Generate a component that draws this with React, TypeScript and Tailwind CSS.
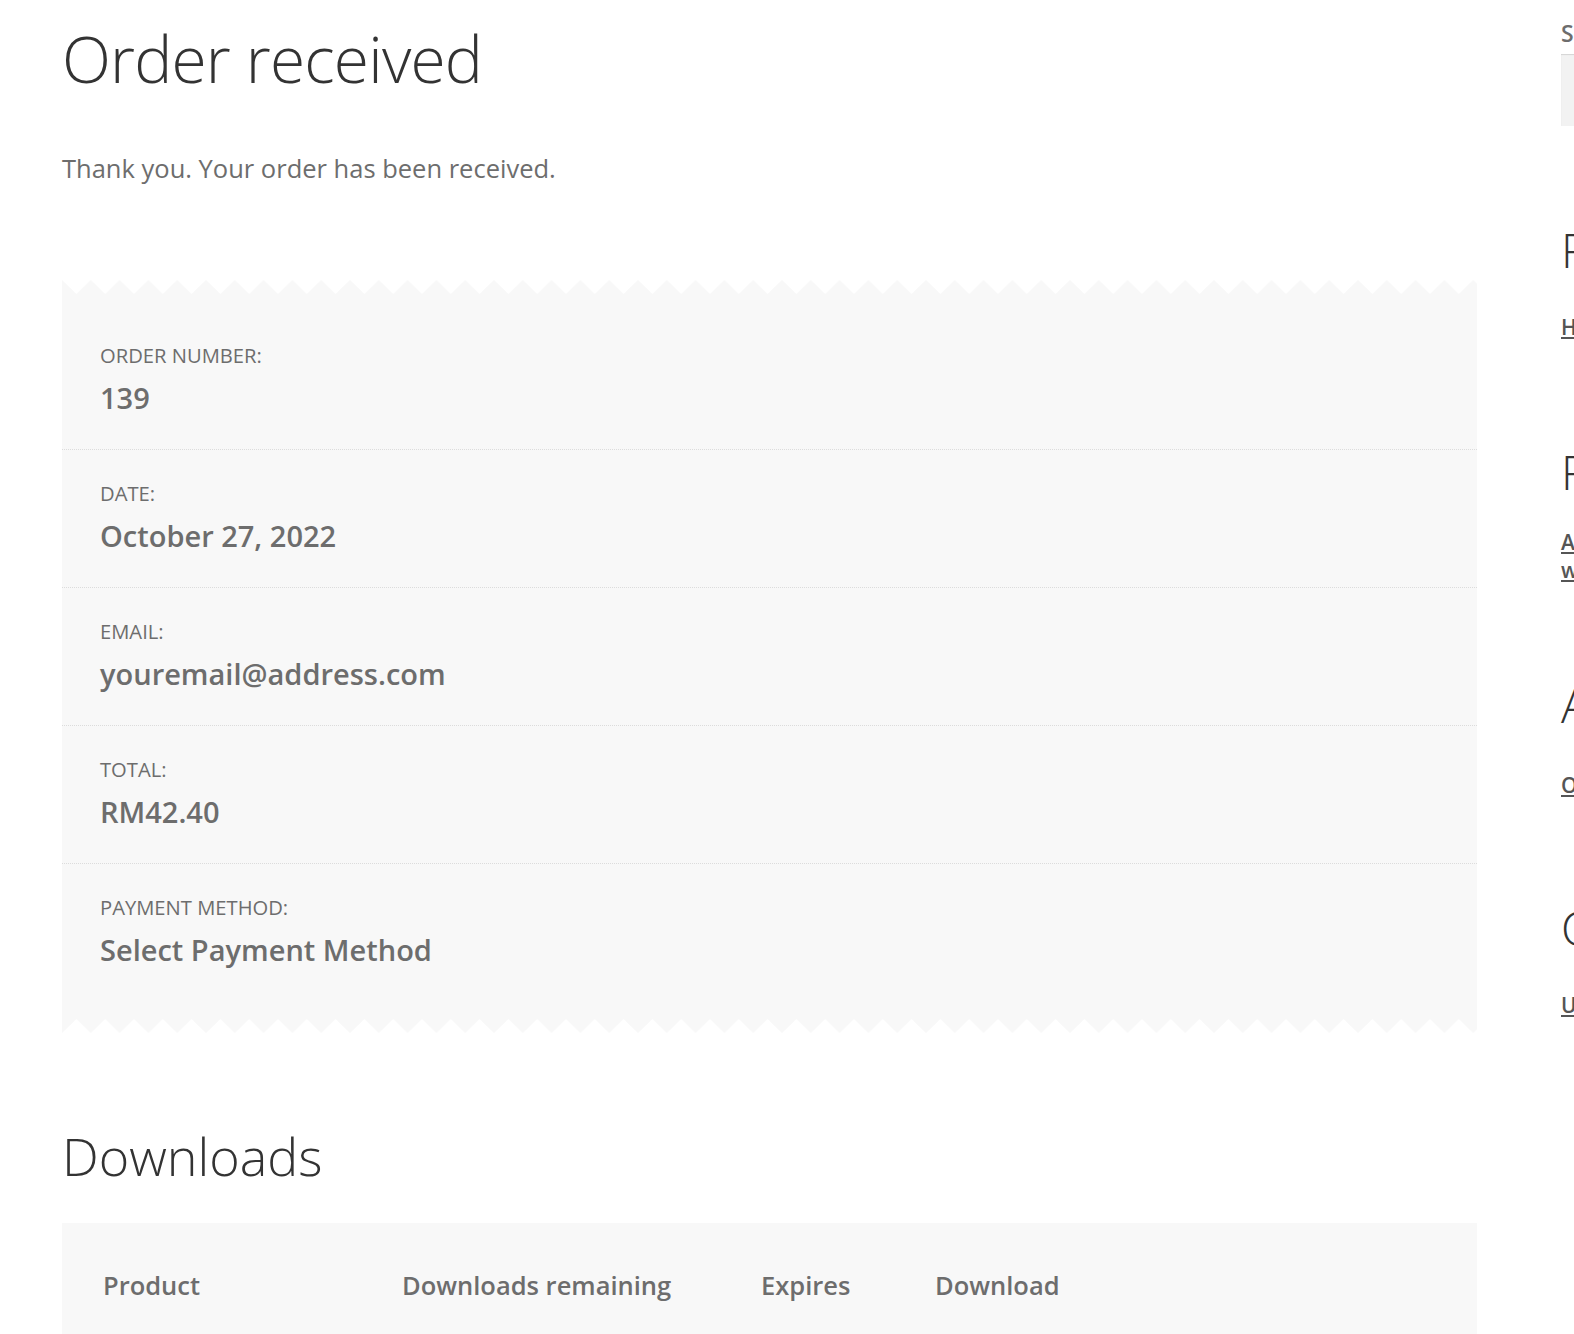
import React from "react";

const rows = [
  { label: "Order number:", value: "139" },
  { label: "Date:", value: "October 27, 2022" },
  { label: "Email:", value: "youremail@address.com" },
  { label: "Total:", value: "RM42.40" },
  { label: "Payment method:", value: "Select Payment Method" },
];

function ZigTop() {
  return (
    <svg className="block w-full h-[14px]" aria-hidden="true">
      <defs>
        <pattern id="zzTop" patternUnits="userSpaceOnUse" width="28.8" height="14">
          <polygon points="0,0 14.4,14 28.8,0 28.8,14 0,14" fill="#f8f8f8" />
        </pattern>
      </defs>
      <rect width="100%" height="14" fill="url(#zzTop)" />
    </svg>
  );
}

function ZigBottom() {
  return (
    <svg className="block w-full h-[14px]" aria-hidden="true">
      <defs>
        <pattern id="zzBot" patternUnits="userSpaceOnUse" width="28.8" height="14">
          <polygon points="0,0 28.8,0 28.8,14 14.4,0 0,14" fill="#f8f8f8" />
        </pattern>
      </defs>
      <rect width="100%" height="14" fill="url(#zzBot)" />
    </svg>
  );
}

export default function App() {
  return (
    <div className="w-screen h-screen overflow-hidden bg-white font-['Open_Sans',sans-serif] text-[#6d6d6d]">
      <div className="flex gap-[84px] pl-[62px] w-[2200px]">
        {/* Main content */}
        <main className="w-[1415px] shrink-0 pt-[19px]">
          <h1 className="text-[64px] leading-[80px] font-light text-[#333333] tracking-[-0.8px]">
            Order received
          </h1>
          <p className="mt-[49px] text-[25.5px] leading-[40px]">
            Thank you. Your order has been received.
          </p>

          <div className="mt-[92px]">
            <ZigTop />
            <ul className="bg-[#f8f8f8] pt-[18px] pb-[17px]">
              {rows.map((r, i) => (
                <li
                  key={r.label}
                  className={
                    "h-[138px] pt-[28px] pl-[38px] pr-[38px] " +
                    (i < rows.length - 1 ? "border-b border-dotted border-[#dcdcdc]" : "")
                  }
                >
                  <div className="text-[20.2px] leading-[30px] uppercase">{r.label}</div>
                  <div className="mt-[8px] text-[29px] leading-[40px] font-semibold">
                    {r.value}
                  </div>
                </li>
              ))}
            </ul>
            <ZigBottom />
          </div>

          <h2 className="mt-[88px] text-[52px] leading-[70px] font-light text-[#333333]">
            Downloads
          </h2>

          <div className="mt-[32px] bg-[#f8f8f8]">
            <div className="grid grid-cols-[299px_359px_174px_1fr] pt-[42px] pb-[44px] text-[25.5px] leading-[40px] font-semibold">
              <div className="pl-[41px]">Product</div>
              <div className="pl-[41px]">Downloads remaining</div>
              <div className="pl-[41px]">Expires</div>
              <div className="pl-[41px]">Download</div>
            </div>
          </div>
        </main>

        {/* Sidebar */}
        <aside className="w-[380px] shrink-0 pt-[18px]">
          <div className="text-[23px] leading-[30px] font-semibold text-[#6d6d6d] whitespace-nowrap">
            Search
          </div>
          <div className="mt-[6px] h-[72px] bg-[#f2f2f2] shadow-[inset_0_1px_1px_rgba(0,0,0,0.125)]" />

          <h2 className="mt-[94px] text-[47px] leading-[60px] font-light text-[#333333] whitespace-nowrap">
            Recent Posts
          </h2>
          <div className="mt-[32px] text-[21px] leading-[30px] font-semibold whitespace-nowrap">
            <a className="underline text-[#555555]">Hello world!</a>
          </div>

          <h2 className="mt-[100px] text-[47px] leading-[60px] font-light text-[#333333] whitespace-nowrap">
            Recent Comments
          </h2>
          <div className="mt-[26px] text-[21px] leading-[28px]">
            <a className="underline font-semibold text-[#555555]">A WordPress Commenter</a> on Hello
            <br />
            <a className="underline font-semibold text-[#555555]">world!</a>
          </div>

          <h2 className="mt-[91px] text-[47px] leading-[60px] font-light text-[#333333] whitespace-nowrap">
            Archives
          </h2>
          <div className="mt-[35px] text-[21px] leading-[30px] font-semibold whitespace-nowrap">
            <a className="underline text-[#555555]">October 2022</a>
          </div>

          <h2 className="mt-[98px] text-[47px] leading-[60px] font-light text-[#333333] whitespace-nowrap">
            Categories
          </h2>
          <div className="mt-[32px] text-[21px] leading-[30px] font-semibold whitespace-nowrap">
            <a className="underline text-[#555555]">Uncategorized</a>
          </div>
        </aside>
      </div>
    </div>
  );
}
